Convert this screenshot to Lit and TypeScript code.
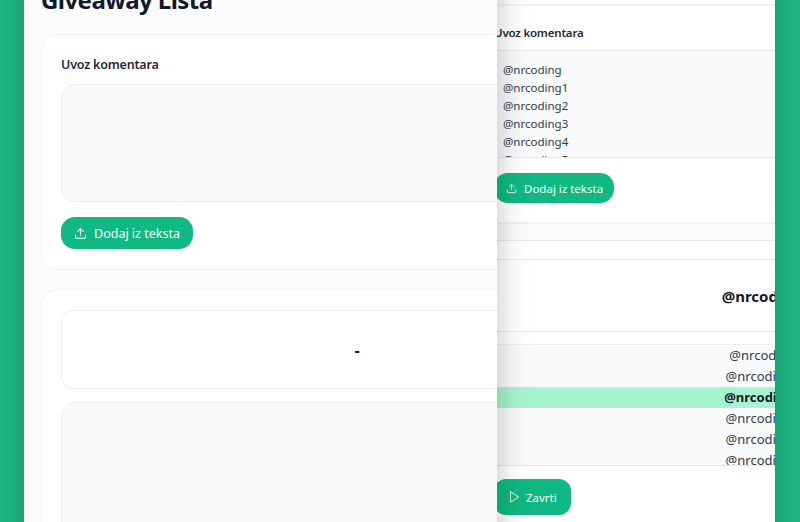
import { LitElement, html, css, svg } from "lit";
import { customElement } from "lit/decorators.js";

const upload = svg`<path d="M21 15v4a2 2 0 0 1-2 2H5a2 2 0 0 1-2-2v-4"/><polyline points="17 8 12 3 7 8"/><line x1="12" y1="3" x2="12" y2="15"/>`;
const play = svg`<polygon points="6 3 20 12 6 21 6 3"/>`;

@customElement("app-root")
export class AppRoot extends LitElement {
  static styles = css`
    :host {
      display: block;
      position: relative;
      width: 800px;
      height: 522px;
      overflow: hidden;
      background: #1dba84;
      font-family: "Noto Sans", "Open Sans", sans-serif;
      color: #111827;
    }
    .window {
      position: absolute;
      top: -40px;
      height: 700px;
      overflow: hidden;
      box-shadow: 0 0 30px rgba(0, 0, 0, 0.25);
    }
    .win-left {
      left: 24px;
      width: 473px;
      background: #fcfcfd;
      padding: 24px 0 0 17px;
      box-sizing: border-box;
      z-index: 2;
    }
    .win-right {
      left: 440px;
      width: 335px;
      background: #fff;
      border-radius: 24px;
      z-index: 1;
    }
    h1 {
      margin: 0 0 18px;
      font-size: 24px;
      letter-spacing: -0.55px;
      line-height: 32px;
      font-weight: 700;
      white-space: nowrap;
    }
    .card {
      width: 632px;
      box-sizing: border-box;
      background: #fff;
      border: 1px solid #f1f2f4;
      border-radius: 16px;
      padding: 20px 19px;
      margin-bottom: 19px;
    }
    label {
      display: block;
      font-size: 12.5px;
      letter-spacing: -0.2px;
      line-height: 20px;
      font-weight: 600;
      color: #1f2937;
      margin-bottom: 9px;
      white-space: nowrap;
    }
    .area {
      height: 118px;
      box-sizing: border-box;
      background: #f9fafb;
      border: 1px solid #eceef1;
      border-radius: 14px;
      margin-bottom: 15px;
    }
    .btn {
      display: flex;
      width: max-content;
      align-items: center;
      gap: 7px;
      height: 32px;
      box-sizing: border-box;
      padding: 0 13px;
      background: #10b981;
      color: #f2fffa;
      border-radius: 14px;
      font-size: 12.5px;
      white-space: nowrap;
    }
    .btn svg {
      width: 13px;
      height: 13px;
      fill: none;
      stroke: currentColor;
      stroke-width: 2;
      stroke-linecap: round;
      stroke-linejoin: round;
    }
    .result {
      height: 79px;
      box-sizing: border-box;
      border: 1px solid #eceef1;
      border-radius: 12px;
      display: flex;
      align-items: center;
      justify-content: center;
      font-size: 16px;
      font-weight: 700;
      margin-bottom: 13px;
    }
    .tall {
      height: 300px;
      box-sizing: border-box;
      background: #f9fafb;
      border: 1px solid #eceef1;
      border-radius: 14px;
    }

    .rcard {
      width: 600px;
      box-sizing: border-box;
      margin-left: 34px;
      padding: 0 20px;
      background: #fff;
      border-top: 2px solid #f1f2f4;
    }
    .r1 {
      margin-top: 44px;
      height: 218px;
      padding-top: 17px;
    }
    .r1 label {
      font-size: 11.5px;
      margin-bottom: 7px;
    }
    .lines {
      height: 108px;
      box-sizing: border-box;
      overflow: hidden;
      background: #f9fafb;
      border-top: 1px solid #e5e7eb;
      border-bottom: 1px solid #e5e7eb;
      padding: 10px 9px;
      font-size: 11.5px;
      line-height: 18px;
      color: #2f3a4a;
    }
    .r1 .btn {
      height: 30px;
      padding: 0 11px 0 12px;
      margin-top: 15px;
      font-size: 11.5px;
      gap: 7px;
    }
    .r1 .btn svg {
      width: 11px;
      height: 11px;
    }
    .band {
      height: 18px;
      box-sizing: border-box;
      margin-left: 34px;
      background: #fbfbfc;
      border-top: 2px solid #f1f2f4;
    }
    .r2 {
      border-top: 1px solid #e8e9ee;
      padding-top: 18px;
    }
    .winner {
      height: 73px;
      box-sizing: border-box;
      border-top: 1px solid #e5e7eb;
      border-bottom: 1px solid #e5e7eb;
      display: flex;
      align-items: center;
      justify-content: center;
      font-size: 15px;
      font-weight: 700;
      padding-left: 8px;
      margin-bottom: 12px;
      width: 536px;
    }
    .list {
      width: 536px;
      height: 122px;
      box-sizing: border-box;
      overflow: hidden;
      background: #f9fafb;
      border-top: 1px solid #eceef1;
      border-bottom: 1px solid #e5e7eb;
      font-size: 13px;
      color: #2f3a4a;
      text-align: center;
    }
    .row {
      height: 21px;
      line-height: 21px;
      padding-left: 1px;
    }
    .row.on {
      background: #a7f3d0;
      color: #111827;
      font-weight: 700;
    }
    .btn.spin {
      height: 36px;
      padding: 0 14px 0 12.5px;
      margin-top: 13px;
      border-radius: 12px;
      gap: 5.5px;
      font-size: 11.5px;
    }
    .btn.spin svg {
      width: 14px;
      height: 14px;
      stroke-width: 1.6;
    }
  `;

  render() {
    const lines = ["", "1", "2", "3", "4", "5"];
    return html`
      <section class="window win-right">
        <div class="rcard r1">
          <label>Uvoz komentara</label>
          <div class="lines">${lines.map((n) => html`<div>@nrcoding${n}</div>`)}</div>
          <span class="btn"><svg viewBox="0 0 24 24">${upload}</svg>Dodaj iz teksta</span>
        </div>
        <div class="band"></div>
        <div class="rcard r2">
          <div class="winner">@nrcoding2</div>
          <div class="list">
            ${["", "1"].map((n) => html`<div class="row">@nrcoding${n}</div>`)}
            <div class="row on">@nrcoding2</div>
            ${["3", "4", "5"].map((n) => html`<div class="row">@nrcoding${n}</div>`)}
          </div>
          <span class="btn spin"><svg viewBox="0 0 24 24">${play}</svg>Zavrti</span>
        </div>
      </section>
      <section class="window win-left">
        <h1>Giveaway Lista</h1>
        <div class="card">
          <label>Uvoz komentara</label>
          <div class="area"></div>
          <span class="btn"><svg viewBox="0 0 24 24">${upload}</svg>Dodaj iz teksta</span>
        </div>
        <div class="card">
          <div class="result">-</div>
          <div class="tall"></div>
        </div>
      </section>
    `;
  }
}
